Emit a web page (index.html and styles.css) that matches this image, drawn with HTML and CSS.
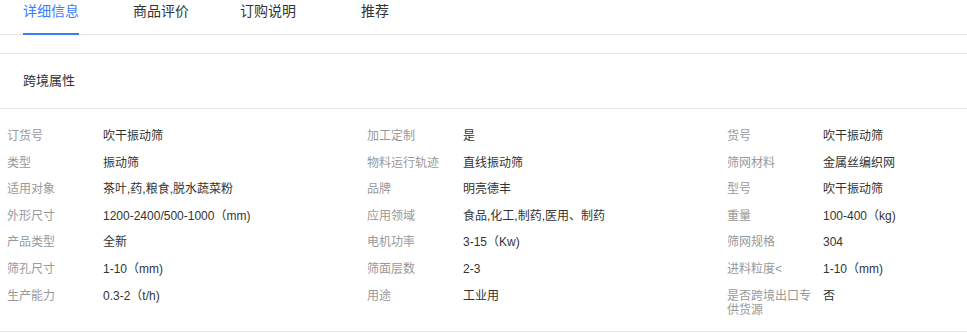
FILE: index.html
```html
<!DOCTYPE html>
<html lang="zh-CN">

<head>
    <meta charset="UTF-8">
    <meta name="viewport" content="width=device-width, initial-scale=1.0">
    <title>详细信息</title>
    <link rel="stylesheet" href="styles.css">
</head>

<body>

    <!-- 标签栏 -->
    <div class="tabs">
        <div class="tab active">详细信息</div>
        <div class="tab">商品评价</div>
        <div class="tab">订购说明</div>
        <div class="tab">推荐</div>
    </div>

    <div class="section">
        <div class="section-title">跨境属性</div>

        <div class="attrs">
            <div class="attr"><span class="attr-name">订货号</span><span class="attr-value">吹干振动筛</span></div>
            <div class="attr"><span class="attr-name">加工定制</span><span class="attr-value">是</span></div>
            <div class="attr"><span class="attr-name">货号</span><span class="attr-value">吹干振动筛</span></div>

            <div class="attr"><span class="attr-name">类型</span><span class="attr-value">振动筛</span></div>
            <div class="attr"><span class="attr-name">物料运行轨迹</span><span class="attr-value">直线振动筛</span></div>
            <div class="attr"><span class="attr-name">筛网材料</span><span class="attr-value">金属丝编织网</span></div>

            <div class="attr"><span class="attr-name">适用对象</span><span class="attr-value">茶叶,药,粮食,脱水蔬菜粉</span></div>
            <div class="attr"><span class="attr-name">品牌</span><span class="attr-value">明亮德丰</span></div>
            <div class="attr"><span class="attr-name">型号</span><span class="attr-value">吹干振动筛</span></div>

            <div class="attr"><span class="attr-name">外形尺寸</span><span class="attr-value">1200-2400/500-1000（mm)</span></div>
            <div class="attr"><span class="attr-name">应用领域</span><span class="attr-value">食品,化工,制药,医用、制药</span></div>
            <div class="attr"><span class="attr-name">重量</span><span class="attr-value">100-400（kg)</span></div>

            <div class="attr"><span class="attr-name">产品类型</span><span class="attr-value">全新</span></div>
            <div class="attr"><span class="attr-name">电机功率</span><span class="attr-value">3-15（Kw)</span></div>
            <div class="attr"><span class="attr-name">筛网规格</span><span class="attr-value">304</span></div>

            <div class="attr"><span class="attr-name">筛孔尺寸</span><span class="attr-value">1-10（mm)</span></div>
            <div class="attr"><span class="attr-name">筛面层数</span><span class="attr-value">2-3</span></div>
            <div class="attr"><span class="attr-name">进料粒度&lt;</span><span class="attr-value">1-10（mm)</span></div>

            <div class="attr"><span class="attr-name">生产能力</span><span class="attr-value">0.3-2（t/h)</span></div>
            <div class="attr"><span class="attr-name">用途</span><span class="attr-value">工业用</span></div>
            <div class="attr"><span class="attr-name">是否跨境出口专供货源</span><span class="attr-value">否</span></div>
        </div>
    </div>

</body>

</html>
```

FILE: styles.css
```css
body{
    margin: 0;
    background: #fff;
    font-family: "Liberation Sans", "Noto Sans CJK SC", sans-serif;
    color: #333;
}

.tabs{
    display: flex;
    height: 34px;
    padding-left: 23px;
    border-bottom: 1px solid #e6e6e6;
}

.tab{
    box-sizing: border-box;
    height: 35px;
    margin-bottom: -1px;
    font-size: 14px;
    line-height: 22px;
    color: #333;
    cursor: pointer;
}
.tab:nth-child(2){ width: 107px; }
.tab:nth-child(3){ width: 121px; }

.tab.active{
    margin-right: 54px;
    color: #3b7bfd;
    border-bottom: 2px solid #3b7bfd;
}

.section{
    margin-top: 18px;
    border-top: 1px solid #e6e6e6;
    border-bottom: 1px solid #e6e6e6;
}

.section-title{
    height: 54px;
    line-height: 54px;
    padding-left: 23px;
    font-size: 13px;
    color: #333;
    border-bottom: 1px solid #e6e6e6;
}

.attrs{
    display: grid;
    grid-template-columns: 360px 360px 1fr;
    padding: 14px 0 7px 7px;
}

.attr{
    display: flex;
    padding: 6px 0;
    font-size: 12px;
    line-height: 14.6px;
}

.attr-name{
    box-sizing: border-box;
    flex: 0 0 96px;
    padding-right: 10px;
    color: #999;
}

.attr-value{
    color: #333;
}
```
